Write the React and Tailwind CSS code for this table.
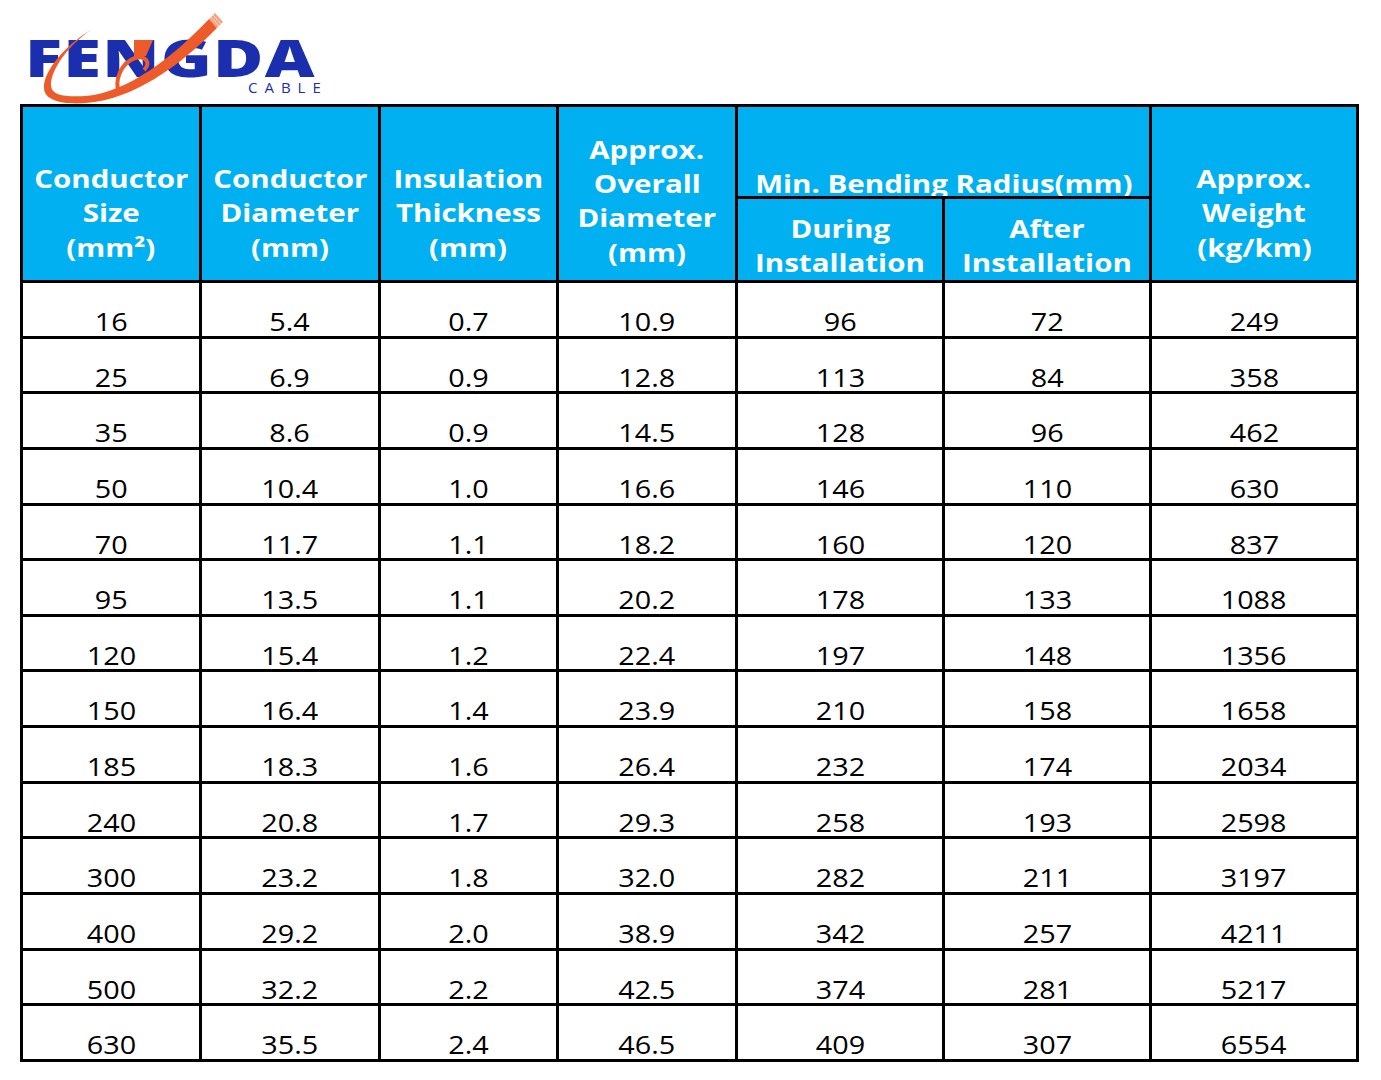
import React from 'react';

const rows = [
    ['16', '5.4', '0.7', '10.9', '96', '72', '249'],
    ['25', '6.9', '0.9', '12.8', '113', '84', '358'],
    ['35', '8.6', '0.9', '14.5', '128', '96', '462'],
    ['50', '10.4', '1.0', '16.6', '146', '110', '630'],
    ['70', '11.7', '1.1', '18.2', '160', '120', '837'],
    ['95', '13.5', '1.1', '20.2', '178', '133', '1088'],
    ['120', '15.4', '1.2', '22.4', '197', '148', '1356'],
    ['150', '16.4', '1.4', '23.9', '210', '158', '1658'],
    ['185', '18.3', '1.6', '26.4', '232', '174', '2034'],
    ['240', '20.8', '1.7', '29.3', '258', '193', '2598'],
    ['300', '23.2', '1.8', '32.0', '282', '211', '3197'],
    ['400', '29.2', '2.0', '38.9', '342', '257', '4211'],
    ['500', '32.2', '2.2', '42.5', '374', '281', '5217'],
    ['630', '35.5', '2.4', '46.5', '409', '307', '6554'],
];

// header cell: lines stacked at the bottom of the cell
const Head = ({ lines, className = '' }) => (
    <div className={`bg-[#00b0f0] flex flex-col justify-end items-center overflow-hidden text-white font-bold text-[25px] ${className}`}>
        {lines.map((l) => (
            <div key={l} className="whitespace-nowrap">
                <span className="inline-block scale-x-[1.18]">{l}</span>
            </div>
        ))}
    </div>
);

const Logo = () => (
    <div className="relative h-[104px] pl-[25px] pt-[37px]">
        <div className="w-[296px]">
            <div className="font-['Open_Sans'] font-extrabold text-[52px] leading-[40px] text-[#1b2fae] origin-left scale-x-[1.32] tracking-[1px]">
                FENGDA
            </div>
            <div className="mt-[3px] pl-[223px] font-['Open_Sans'] text-[15px] leading-[15px] tracking-[7px] text-[#1b2fae]">
                CABLE
            </div>
        </div>
        {/* orange cable swoosh */}
        <svg className="absolute left-0 top-0 w-[340px] h-[104px]" viewBox="0 0 340 104">
            <polygon points="134,40 153,40 146,56 134,56" fill="#ee5b2b" />
            <path
                d="M92,29 C66,47 50,72 51,86 C52,96 66,97 86,96 C128,92 172,58 209,19 L217,28 C180,66 132,100 86,103 C62,105 44,100 44,88 C43,72 64,46 92,29 Z"
                fill="#ee5b2b"
            />
            <path d="M119,94 C114,80 121,63 135,58 C146,55 151,63 144,70" fill="none" stroke="#ee5b2b" strokeWidth="4" />
            <polygon points="209,19 217,28 223,22 215,13" fill="#f4a27f" />
            <path d="M211,17 L219,26 M213,15 L221,24" stroke="#fbe0d2" strokeWidth="1" />
        </svg>
    </div>
);

export default function App() {
    return (
        <div className="w-[1381px] h-[1080px] bg-white font-['Open_Sans',sans-serif]">
            <Logo />
            <div className="ml-[20px] w-fit grid grid-cols-[176px_176px_175px_176px_204px_204px_204px] grid-rows-[89px_81px_repeat(14,52.64px)] gap-[3px] bg-black p-[3px]">
                <Head className="row-span-2 pb-[16px] leading-[34.5px]" lines={['Conductor', 'Size', '(mm²)']} />
                <Head className="row-span-2 pb-[16px] leading-[34.5px]" lines={['Conductor', 'Diameter', '(mm)']} />
                <Head className="row-span-2 pb-[16px] leading-[34.5px]" lines={['Insulation', 'Thickness', '(mm)']} />
                <Head className="row-span-2 pb-[11px] leading-[34.3px]" lines={['Approx.', 'Overall', 'Diameter', '(mm)']} />
                <Head className="col-span-2 leading-[34px] [&>div]:mb-[-4px]" lines={['Min. Bending Radius(mm)']} />
                <Head className="row-span-2 pb-[16px] leading-[34.5px]" lines={['Approx.', 'Weight', '(kg/km)']} />
                <Head className="pb-[1px] leading-[34px]" lines={['During', 'Installation']} />
                <Head className="pb-[1px] leading-[34px]" lines={['After', 'Installation']} />

                {rows.map((r, i) =>
                    r.map((v, j) => (
                        <div key={`${i}-${j}`} className="bg-white text-black text-center text-[25px] leading-[26px] pt-[25px]">
                            <span className="inline-block scale-x-[1.15]">{v}</span>
                        </div>
                    ))
                )}
            </div>
        </div>
    );
}
